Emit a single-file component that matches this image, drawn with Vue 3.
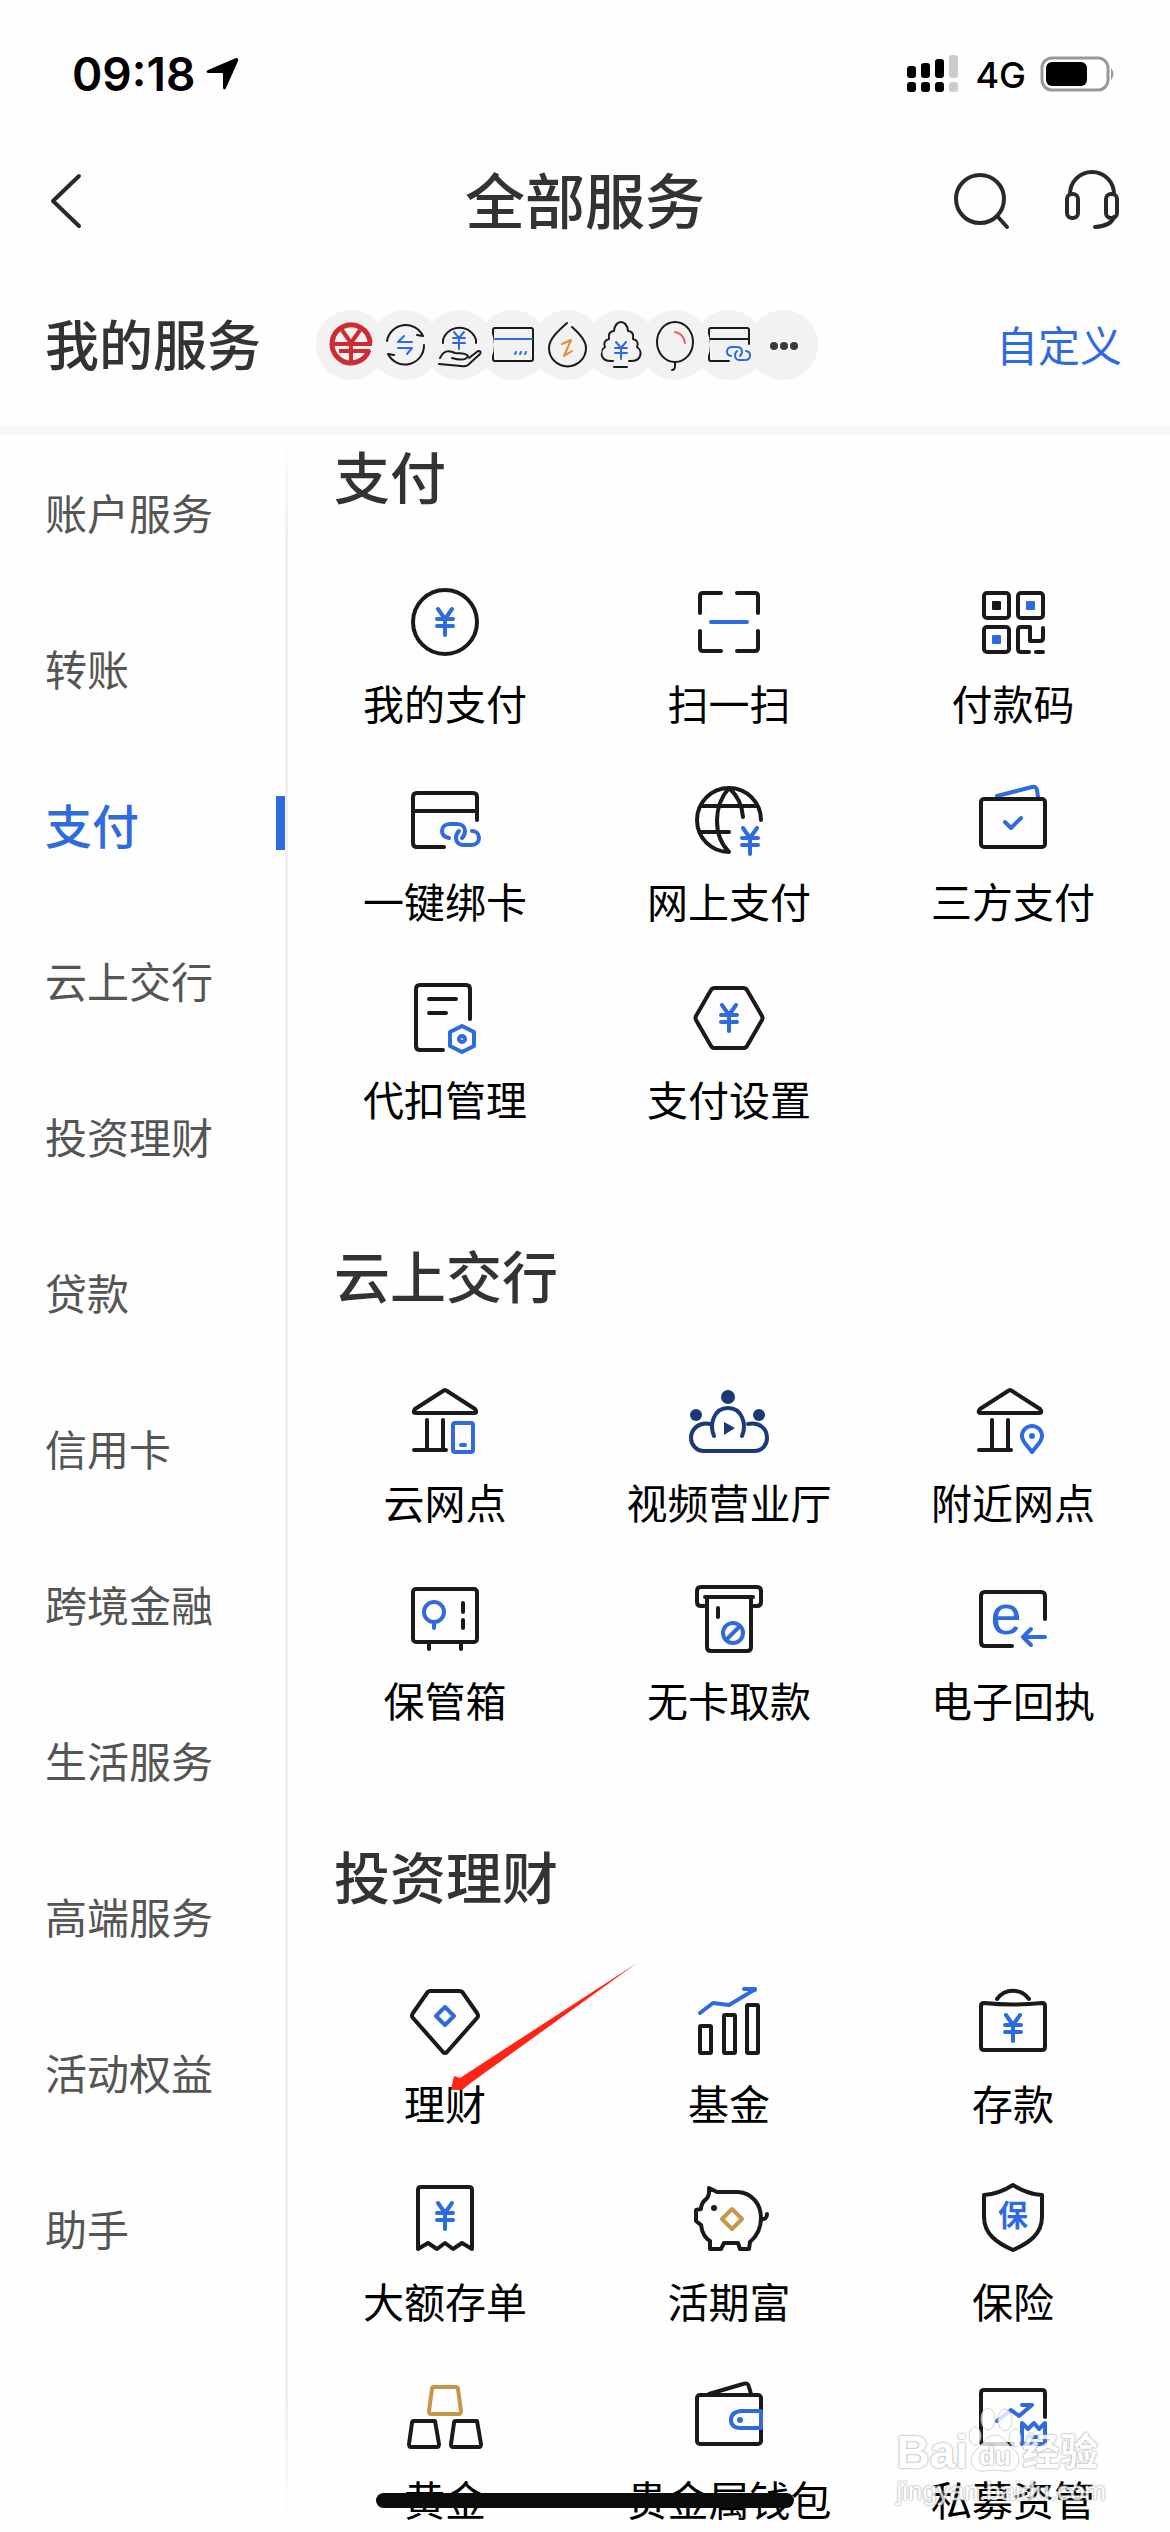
<script setup>
const BLUE = '#2f6ade'
const GOLD = '#c8964b'

const yen = (x = 0, y = 0) =>
  `<path stroke="${BLUE}" transform="translate(${x} ${y})" d="M35 29l7 10 7-10M42 39v16M34 39h16M34 46h16"/>`
const smallYen = (x, y) =>
  `<path stroke="${BLUE}" stroke-width="2" d="M${x - 5} ${y}l5 6 5-6M${x} ${y + 6}v11M${x - 6} ${y + 6}h12M${x - 6} ${y + 11}h12"/>`
const link = `<path stroke="${BLUE}" d="M46 60c-5-1-7-4-7-7 0-4 3-7 8-7h7c5 0 8 3 8 7 0 3-1 5-3 7M69 53c4 0 7 3 7 7s-3 7-8 7h-7c-5 0-8-3-8-7 0-3 1-5 3-7"/>`
const openFrame = 'M74 42V19q0-4-4-4H14q-4 0-4 4v46q0 4 4 4h27'
const bank = 'M40 12q2-2 4 0l28 18q3 4-1 4H13q-4 0-1-4zM24 41v30M40 41v30M11 71h32'

const quickIcons = [
  `<g stroke="#cf2b33" stroke-width="4" stroke-linecap="butt"><path stroke-width="5" d="M54 33A19 19 0 1 0 53 40"/><path d="M26 20l9 13 9-13M18 34h38M23 41h31M35 33v21"/></g>`,
  `<path d="M17 31A19 19 0 0 1 53 26l-6-1M54 35A19 19 0 0 1 18 44l6 1"/><path stroke="${BLUE}" stroke-width="2" d="M34 26l-6 6h14M28 38h14l-5 6"/>`,
  `<path d="M19 33v-3a17 16 0 0 1 33 0v3M16 48c4-8 9-8 15-5 5 1 9-1 13 3-2 5-9 4-16 2M45 48l9-7q4 0 2 3L44 55q-3 2-7 1l-22-2"/>${smallYen(35, 22)}`,
  `<rect x="15" y="18" width="40" height="33" rx="2"/><path stroke="${BLUE}" d="M17 29h37"/><path stroke="${BLUE}" d="M37 44l1-2M42 44l1-2M47 44l1-2"/>`,
  `<path d="M35 13C26 21 17 29 17 38a18 18 0 0 0 37 0c0-8-7-15-14-21"/><path stroke="#e08c3c" d="M30 34l9-4-7 16 8-5"/>`,
  `<path d="M27 51c-13 1-14-10-8-14-2-4 0-7 4-8-1-5 1-8 5-8 1-12 13-12 14 0 4 0 6 3 5 8 4 1 6 4 4 8 6 4 5 15-8 14M28 57h13"/>${smallYen(35, 32)}`,
  `<ellipse cx="35" cy="32" rx="18" ry="20"/><path d="M35 52v4q0 4-3 4"/><path stroke="#e2626a" d="M35 22q9 2 10 11"/>`,
  `<path d="M55 34V20q0-2-2-2H17q-2 0-2 2v29q0 2 2 2h18M15 29h40"/><path stroke="${BLUE}" d="M37 46c-6-1-5-9 1-9h5c6 0 6 6 3 9M52 41c6 1 5 9-1 9h-5c-6 0-6-6-3-9"/>`,
  `<g fill="#3a3a3a" stroke="none"><circle cx="26" cy="36" r="4"/><circle cx="36" cy="36" r="4"/><circle cx="46" cy="36" r="4"/></g>`,
]

const categories = [
  '账户服务', '转账', '支付', '云上交行', '投资理财', '贷款',
  '信用卡', '跨境金融', '生活服务', '高端服务', '活动权益', '助手',
]
const active = '支付'

const sections = [
  {
    title: '支付',
    items: [
      { name: '我的支付', icon: `<circle cx="42" cy="42" r="32"/>${yen()}` },
      { name: '扫一扫', icon: `<path d="M13 33V16q0-3 3-3h18M50 13h18q3 0 3 3v17M71 51v17q0 3-3 3H50M34 71H16q-3 0-3-3V51"/><path stroke="${BLUE}" d="M24 42h36"/>` },
      { name: '付款码', icon: `<rect x="13" y="13" width="25" height="25" rx="3"/><rect x="47" y="13" width="25" height="25" rx="3"/><rect x="13" y="47" width="25" height="25" rx="3"/><path d="M58 72h-8q-3 0-3-3V50q0-3 3-3h9v14h10q3 0 3-3V48M65 72h7"/><g stroke="none"><rect x="21" y="21" width="9" height="9" rx="1" fill="#1a1a1a"/><rect x="55" y="21" width="9" height="9" rx="1" fill="${BLUE}"/><rect x="21" y="55" width="9" height="9" rx="1" fill="${BLUE}"/></g>` },
      { name: '一键绑卡', icon: `<path d="${openFrame}M10 33h64"/>${link}` },
      { name: '网上支付', icon: `<path d="M74 42A32 32 0 1 0 42 74C26 58 26 28 42 10c8 7 13 17 14 29M14 28h56M14 54h28"/>${yen(21, 21)}` },
      { name: '三方支付', icon: `<path stroke="${BLUE}" d="M26 18l35-9q4-1 5 3l1 7"/><rect x="10" y="21" width="64" height="48" rx="3"/><path stroke="${BLUE}" d="M34 44l6 6 10-10"/>` },
      { name: '代扣管理', icon: `<path d="M67 43V13q0-4-4-4H17q-4 0-4 4v57q0 4 4 4h23M26 23h27M26 37h17"/><path stroke="${BLUE}" d="M59 50l12 6v14l-12 6-12-6V56z"/><circle cx="59" cy="63" r="3" stroke="${BLUE}"/>` },
      { name: '支付设置', icon: `<path d="M28 12h28q3 0 4 2l15 26q1 2 0 4L60 70q-1 2-4 2H28q-3 0-4-2L9 44q-1-2 0-4l15-26q1-2 4-2z"/>${yen()}` },
    ],
  },
  {
    title: '云上交行',
    items: [
      { name: '云网点', icon: `<path d="${bank}"/><g stroke="${BLUE}"><rect x="50" y="44" width="20" height="29" rx="2"/><path d="M58 66h4"/></g>` },
      { name: '视频营业厅', icon: `<g fill="#1b3a77" stroke="none"><circle cx="41" cy="18" r="7"/><circle cx="9" cy="36" r="6"/><circle cx="72" cy="36" r="6"/><path d="M37 43l11 6-11 7z"/></g><path stroke="#1b3a77" d="M27 57C22 45 27 29 41 29s19 16 14 28M23 45c-10-2-19 4-19 14 0 7 6 13 12 13h51c8 0 13-6 13-13 0-10-8-16-19-14"/>` },
      { name: '附近网点', icon: `<path transform="translate(-3 0)" d="${bank}"/><path stroke="${BLUE}" d="M61 73c-5-7-10-10-10-16a10 10 0 0 1 20 0c0 6-5 9-10 16z"/><circle cx="61" cy="57" r="3" fill="${BLUE}" stroke="none"/>` },
      { name: '保管箱', icon: `<rect x="10" y="12" width="64" height="53" rx="3"/><path d="M26 65v7M58 65v7M60 26v9M60 43v8"/><g stroke="${BLUE}"><circle cx="31" cy="35" r="10"/><path d="M31 45v6"/></g>` },
      { name: '无卡取款', icon: `<path d="M17 29h-3q-4 0-4-4V14q0-4 4-4h56q4 0 4 4v11q0 4-4 4h-3M18 20h48M20 20v50q0 4 4 4h36q4 0 4-4V20M31 31v9"/><g stroke="${BLUE}"><circle cx="46" cy="56" r="10"/><path d="M40 62l12-12"/></g>` },
      { name: '电子回执', icon: `<path d="${openFrame}"/><text x="35" y="57" font-size="56" text-anchor="middle" fill="${BLUE}" stroke="none" font-family="Liberation Sans, sans-serif">e</text><path stroke="${BLUE}" d="M60 52l-8 8 8 8M53 60h21"/>` },
    ],
  },
  {
    title: '投资理财',
    items: [
      { name: '理财', marked: true, icon: `<path d="M28 11h28q3 0 4 2l14 20q2 3 0 5L44 72q-2 2-4 0L10 38q-2-2 0-5l14-20q1-2 4-2z"/><path stroke="${BLUE}" d="M42 27l9 9-9 9-9-9z"/>` },
      { name: '基金', icon: `<rect x="13" y="46" width="11" height="27" rx="1"/><rect x="37" y="35" width="11" height="38" rx="1"/><rect x="60" y="25" width="11" height="48" rx="1"/><path stroke="${BLUE}" d="M13 33l13-10 16 2L67 10M57 9h11v1"/>` },
      { name: '存款', icon: `<path d="M26 19c8-11 24-11 32 0M13 23q29 3 58 0 3 0 3 3v41q0 3-3 3H13q-3 0-3-3V26q0-3 3-3z"/>${yen(0, 6)}` },
      { name: '大额存单', icon: `<path d="M15 71V12q0-3 3-3h48q3 0 3 3v59l-10-6-9 6-8-6-8 6-9-6z"/>${yen(0, -4)}` },
      { name: '活期富', icon: `<path d="M22 10l8 4h21c14 1 23 12 23 26 0 11-4 18-11 24l-1 7h-9l-2-6H37l-3 6H23v-8c-5-3-8-8-9-16l-5-4V32l5-1c0-4 2-7 4-9q5-3 4-12zM74 41q6 1 6-5"/><circle cx="27" cy="30" r="3" fill="#1a1a1a" stroke="none"/><path stroke="${GOLD}" d="M45 31l10 10-10 10-10-10z"/>` },
      { name: '保险', icon: `<path d="M42 7q14 9 29 10v22c0 17-13 26-29 33-16-7-29-16-29-33V17q15-1 29-10z"/><text x="42" y="48" font-size="30" font-weight="700" text-anchor="middle" fill="${BLUE}" stroke="none">保</text>` },
      { name: '黄金', icon: `<path stroke="${GOLD}" d="M31 11h22q2 0 2 2l3 22q0 3-2 3H28q-2 0-2-3l3-22q0-2 2-2z"/><path d="M10 45h22l4 23q0 3-2 3H8q-2 0-2-3l3-21q0-2 2-2zM53 45h21l4 23q0 3-2 3H50q-2 0-2-3l3-21q0-2 2-2z"/>` },
      { name: '贵金属钱包', icon: `<path d="M22 18l34-10q5-2 6 3l2 7"/><rect x="10" y="19" width="64" height="49" rx="3"/><path stroke="${BLUE}" fill="#fefefe" d="M74 35H54q-10 1-10 9t10 8h20z"/><circle cx="53" cy="44" r="3" fill="${BLUE}" stroke="none"/>` },
      { name: '私募资管', icon: `<path d="M74 41V17q0-3-3-3H13q-3 0-3 3v48q0 3 3 3h29"/><path stroke="${BLUE}" d="M26 45l14-11 8 6 13-11M51 29h10M51 47l6 6 6-6 5 6 6-6v21H51zM60 61h6"/>` },
    ],
  },
]
</script>

<template>
  <div class="page">
    <div class="status">
      <span class="time">09:18</span>
      <svg class="locate" viewBox="0 0 34 34" aria-hidden="true"><path d="M31 1q3 0 2 3L21 31q-2 3-3 0V17q0-1-1-1H3q-3-1 0-3z" /></svg>
      <svg class="signal" viewBox="0 0 52 38" aria-hidden="true">
        <rect x="0" y="11" width="9" height="12" rx="3" /><rect x="14" y="8" width="9" height="15" rx="3" />
        <rect x="28" y="4" width="9" height="19" rx="3" /><rect class="dim" x="42" y="0" width="9" height="23" rx="3" />
        <rect x="0" y="27" width="9" height="10" rx="3" /><rect x="14" y="27" width="9" height="10" rx="3" />
        <rect x="28" y="27" width="9" height="10" rx="3" /><rect class="dim" x="42" y="27" width="9" height="10" rx="3" />
      </svg>
      <span class="network">4G</span>
      <svg class="battery" viewBox="0 0 76 36" aria-hidden="true">
        <rect x="2" y="2" width="66" height="32" rx="10" fill="none" stroke="#999" stroke-width="3" />
        <rect x="6" y="6" width="41" height="24" rx="6" /><path fill="#999" d="M71 12q5 6 0 12z" />
      </svg>
    </div>

    <header class="bar">
      <button class="tool" type="button" aria-label="返回">
        <svg viewBox="0 0 60 60"><path d="M34 6L8 31l26 25" /></svg>
      </button>
      <h1>全部服务</h1>
      <button class="tool" type="button" aria-label="搜索">
        <svg viewBox="0 0 60 60"><circle cx="28" cy="29" r="24" /><path d="M46 47l9 10" /></svg>
      </button>
      <button class="tool" type="button" aria-label="客服">
        <svg viewBox="0 0 60 60"><path d="M8 24a22 22 0 0 1 44 0M52 47q-3 9-19 10" /><rect x="5" y="24" width="11" height="24" rx="5" /><rect x="44" y="24" width="11" height="24" rx="5" /></svg>
      </button>
    </header>

    <section class="mine">
      <h2>我的服务</h2>
      <ul class="quick">
        <li v-for="(icon, i) in quickIcons" :key="i" :style="{ zIndex: quickIcons.length - i }">
          <svg viewBox="0 0 70 70" aria-hidden="true" v-html="icon"></svg>
        </li>
      </ul>
      <a class="custom" href="#custom">自定义</a>
    </section>

    <div class="body">
      <nav class="side">
        <a v-for="c in categories" :key="c" href="#" :class="{ active: c === active }">{{ c }}</a>
      </nav>
      <main class="content">
        <section v-for="s in sections" :key="s.title" class="group">
          <h2>{{ s.title }}</h2>
          <div class="grid">
            <a v-for="item in s.items" :key="item.name" class="cell" href="#">
              <svg class="icon" viewBox="0 0 84 84" aria-hidden="true" v-html="item.icon"></svg>
              <span>{{ item.name }}</span>
              <svg v-if="item.marked" class="arrow" viewBox="0 0 186 128" aria-hidden="true"><path d="M186 0L21 119l-10 8-11-1 3-13 6 2z" /></svg>
            </a>
          </div>
        </section>
      </main>
    </div>

    <div class="mark">
      <div class="mark-top">
        <span>Bai</span>
        <span class="paw">
          <svg viewBox="0 0 54 66" aria-hidden="true"><ellipse cx="7" cy="29" rx="6" ry="9" /><ellipse cx="20" cy="12" rx="7" ry="11" /><ellipse cx="37" cy="13" rx="7" ry="11" /><ellipse cx="47" cy="31" rx="6" ry="9" /><path d="M27 28c8 0 11 8 17 13 13 10 6 25-7 23q-10-2-20 0c-14 2-19-13-7-23 6-5 9-13 17-13z" /></svg>
          <b>du</b>
        </span>
        <span>经验</span>
      </div>
      <div class="mark-url">jingyan.baidu.com</div>
    </div>
    <div class="home"></div>
  </div>
</template>

<style>
body {
  margin: 0;
  background: #fefefe;
}
</style>

<style scoped>
.page {
  position: relative;
  font-family: "Noto Sans CJK SC", sans-serif;
  color: #333;
  overflow: hidden;
}
h1, h2, ul {
  margin: 0;
  padding: 0;
}
a {
  color: inherit;
  text-decoration: none;
}
.status {
  display: flex;
  align-items: center;
  height: 148px;
  padding: 0 54px 0 72px;
  font-family: Inter, sans-serif;
  color: #000;
}
.time {
  font-size: 46px;
  font-weight: 600;
}
.locate {
  width: 34px;
  height: 34px;
  margin-left: 10px;
}
.signal {
  width: 52px;
  height: 38px;
  margin-left: auto;
}
.dim {
  fill: #ccc;
}
.network {
  margin: 2px 14px 0 16px;
  font-size: 36px;
  font-weight: 500;
}
.battery {
  width: 76px;
  height: 36px;
}
.bar {
  display: flex;
  align-items: center;
  justify-content: flex-end;
  gap: 50px;
  height: 104px;
  padding: 0 48px 0 45px;
}
.bar h1 {
  flex: 1;
  padding: 0 0 4px 113px;
  text-align: center;
  font-size: 60px;
  font-weight: 500;
  line-height: 90px;
}
.tool {
  width: 60px;
  height: 60px;
  padding: 0;
  border: 0;
  background: none;
}
.tool svg {
  display: block;
  fill: none;
  stroke: #2a2a2a;
  stroke-width: 4;
  stroke-linecap: round;
  stroke-linejoin: round;
}
.mine {
  display: flex;
  align-items: center;
  height: 162px;
  padding: 12px 48px 0 45px;
  border-bottom: 9px solid #f6f6f6;
}
.mine h2 {
  padding-bottom: 4px;
  font-size: 54px;
  font-weight: 500;
  line-height: 80px;
}
.quick {
  display: flex;
  margin-left: 55px;
  list-style: none;
}
.quick li {
  position: relative;
  width: 70px;
  height: 70px;
  margin-right: -16px;
  border-radius: 50%;
  background: #f3f2f2;
}
.quick svg {
  display: block;
  fill: none;
  stroke: #1a1a1a;
  stroke-width: 2;
  stroke-linecap: round;
  stroke-linejoin: round;
}
.custom {
  margin-left: auto;
  padding-bottom: 4px;
  font-size: 42px;
  color: #2f6ade;
}
.body {
  display: flex;
}
.side {
  flex: 0 0 285px;
  display: flex;
  flex-direction: column;
  border-right: 3px solid;
  border-image: linear-gradient(#fefefe, #f0f0f0 100px, #f0f0f0 1970px, #fefefe) 1;
}
.side a {
  box-sizing: border-box;
  display: flex;
  align-items: center;
  justify-content: space-between;
  height: 156px;
  padding: 0 0 4px 45px;
  font-size: 42px;
  color: #555;
}
.side .active {
  font-size: 47px;
  font-weight: 500;
  color: #2f6ade;
}
.side .active::after {
  content: "";
  width: 9px;
  height: 54px;
  background: #2f6ade;
}
.content {
  flex: 1;
  padding: 7px 15px 0;
}
.group {
  margin-bottom: 114px;
}
.group:last-child {
  margin-bottom: 0;
}
.group h2 {
  padding-left: 31px;
  font-size: 56px;
  font-weight: 500;
  line-height: 66px;
}
.grid {
  display: grid;
  grid-template-columns: repeat(3, 1fr);
  row-gap: 47px;
  margin-top: 72px;
}
.cell {
  position: relative;
  display: flex;
  flex-direction: column;
  align-items: center;
  font-size: 41px;
  line-height: 58px;
  color: #000;
}
.icon {
  width: 84px;
  height: 84px;
  margin-bottom: 9px;
  fill: none;
  stroke: #1a1a1a;
  stroke-width: 4;
  stroke-linecap: round;
  stroke-linejoin: round;
}
.arrow {
  position: absolute;
  left: 148px;
  top: -17px;
  z-index: 1;
  width: 186px;
  height: 128px;
  fill: #ff2414;
}
.mark {
  position: absolute;
  right: 64px;
  bottom: 18px;
  color: #fff;
  opacity: 0.8;
  font-family: "Liberation Sans", "Noto Sans CJK SC", sans-serif;
  text-shadow: 0 0 2px #999, 0 0 2px #999;
}
.mark-top {
  display: flex;
  align-items: flex-end;
  height: 68px;
  font-size: 46px;
  font-weight: 700;
  line-height: 42px;
}
.mark-top span:last-child {
  font-size: 38px;
}
.paw {
  position: relative;
  width: 54px;
  height: 66px;
}
.paw svg {
  display: block;
  fill: #fff;
  stroke: #ccc;
}
.paw b {
  position: absolute;
  left: 0;
  right: 0;
  bottom: -4px;
  text-align: center;
  font-size: 26px;
}
.mark-url {
  font-size: 26px;
  line-height: 36px;
}
.home {
  position: fixed;
  left: 50%;
  bottom: 24px;
  width: 418px;
  height: 15px;
  margin-left: -209px;
  border-radius: 8px;
  background: #0c0c0c;
}
</style>
